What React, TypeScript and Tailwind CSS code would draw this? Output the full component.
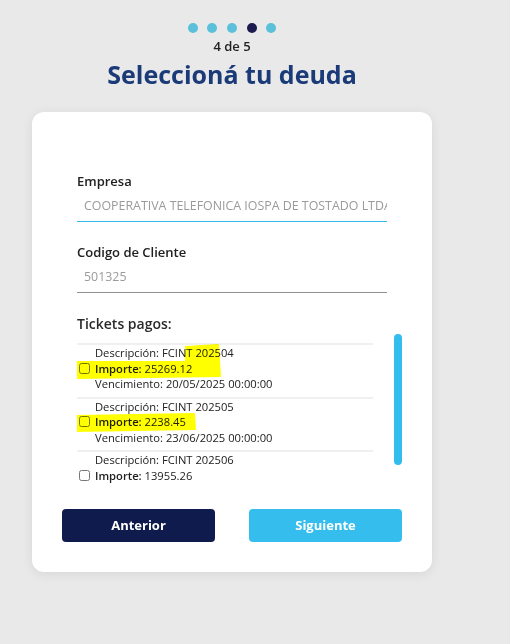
import { useState } from "react";

type Ticket = {
  id: string;
  descripcion: string;
  importe: string;
  vencimiento: string;
};

const tickets: Ticket[] = [
  { id: "202504", descripcion: "FCINT 202504", importe: "25269.12", vencimiento: "20/05/2025 00:00:00" },
  { id: "202505", descripcion: "FCINT 202505", importe: "2238.45", vencimiento: "23/06/2025 00:00:00" },
  { id: "202506", descripcion: "FCINT 202506", importe: "13955.26", vencimiento: "21/07/2025 00:00:00" },
];

const steps = [1, 2, 3, 4, 5];

export default function App() {
  const [selected, setSelected] = useState<string[]>([]);

  const toggle = (id: string) => {
    setSelected((prev) => (prev.includes(id) ? prev.filter((x) => x !== id) : [...prev, id]));
  };

  return (
    <div
      className="min-h-[644px] w-full bg-[#e9e9e9] text-[#212121]"
      style={{ fontFamily: '"Open Sans", "Noto Sans", sans-serif' }}
    >
      <div className="flex w-[464px] flex-col items-center pt-[23px]">
        <div className="flex gap-[9.6px]">
          {steps.map((s) => (
            <span
              key={s}
              className={`h-[10px] w-[10px] rounded-full ${s === 4 ? "bg-[#1c1a4e]" : "bg-[#5bc0da]"}`}
            />
          ))}
        </div>
        <p className="mt-[4px] text-[13px] leading-[18px] font-semibold text-[#222]">4 de 5</p>
        <h1 className="mt-[2px] text-[25px] leading-[35px] font-bold text-[#1a3a78]">Seleccioná tu deuda</h1>

        <div className="mt-[20px] w-[400px] rounded-xl bg-white pt-[59px] pb-[30px] shadow-[0_2px_12px_rgba(0,0,0,0.08)]">
          <div className="px-[45px]">
            <label className="block text-[13px] leading-[20px] font-semibold">Empresa</label>
            <div className="h-[31px] overflow-hidden border-b border-[#33bbee] pl-[7px] text-[12.4px] leading-[30px] whitespace-nowrap text-[#9a9a9a]">
              COOPERATIVA TELEFONICA IOSPA DE TOSTADO LTDA
            </div>

            <label className="mt-[20px] block text-[13px] leading-[20px] font-semibold">Codigo de Cliente</label>
            <div className="h-[31px] border-b border-[#8f8f8f] pl-[7px] text-[12.4px] leading-[30px] text-[#9a9a9a]">
              501325
            </div>

            <p className="mt-[20px] text-[14px] leading-[21px] font-semibold text-[#2a2a2a]">Tickets pagos:</p>

            <div className="flex h-[152px] -mr-[15px]">
              <div className="relative flex-1 overflow-hidden pt-[9px] pr-[21px]">
                {tickets.map((t) => (
                  <div key={t.id} className="flex items-center border-t-2 border-[#f0f0f0] pb-[5px] text-[11.2px] leading-[15.5px]">
                    <div className="flex w-[18px] shrink-0 items-center">
                      <input
                        type="checkbox"
                        checked={selected.includes(t.id)}
                        onChange={() => toggle(t.id)}
                        className="m-0 ml-[2px] h-[11px] w-[11px]"
                      />
                    </div>
                    <div>
                      <p>Descripción: {t.descripcion}</p>
                      <p>
                        <span className="font-semibold">Importe:</span> {t.importe}
                      </p>
                      <p>Vencimiento: {t.vencimiento}</p>
                    </div>
                  </div>
                ))}
                <svg
                  className="pointer-events-none absolute top-0 left-0 overflow-visible mix-blend-multiply"
                  width="1"
                  height="1"
                >
                  <polygon
                    points="109,13 141,11 143,42 -1,44 -4,28 109,28"
                    fill="#ffff00"
                    stroke="#ffff00"
                    strokeWidth="2"
                    strokeLinejoin="round"
                  />
                  <polygon
                    points="-1,82 117,80 118,95 0,97"
                    fill="#ffff00"
                    stroke="#ffff00"
                    strokeWidth="2"
                    strokeLinejoin="round"
                  />
                </svg>
              </div>
              <div className="w-[8px] shrink-0">
                <div className="h-[131px] w-[8px] rounded-full bg-[#33bdee]" />
              </div>
            </div>
          </div>

          <div className="mt-[23px] flex justify-between px-[30px]">
            <button
              type="button"
              className="h-[33px] w-[153px] rounded-[4px] bg-[#0f1b4d] text-[13px] font-bold text-white"
            >
              Anterior
            </button>
            <button
              type="button"
              className="h-[33px] w-[153px] rounded-[4px] bg-[#35bdee] text-[13px] font-bold text-white"
            >
              Siguiente
            </button>
          </div>
        </div>
      </div>
    </div>
  );
}
